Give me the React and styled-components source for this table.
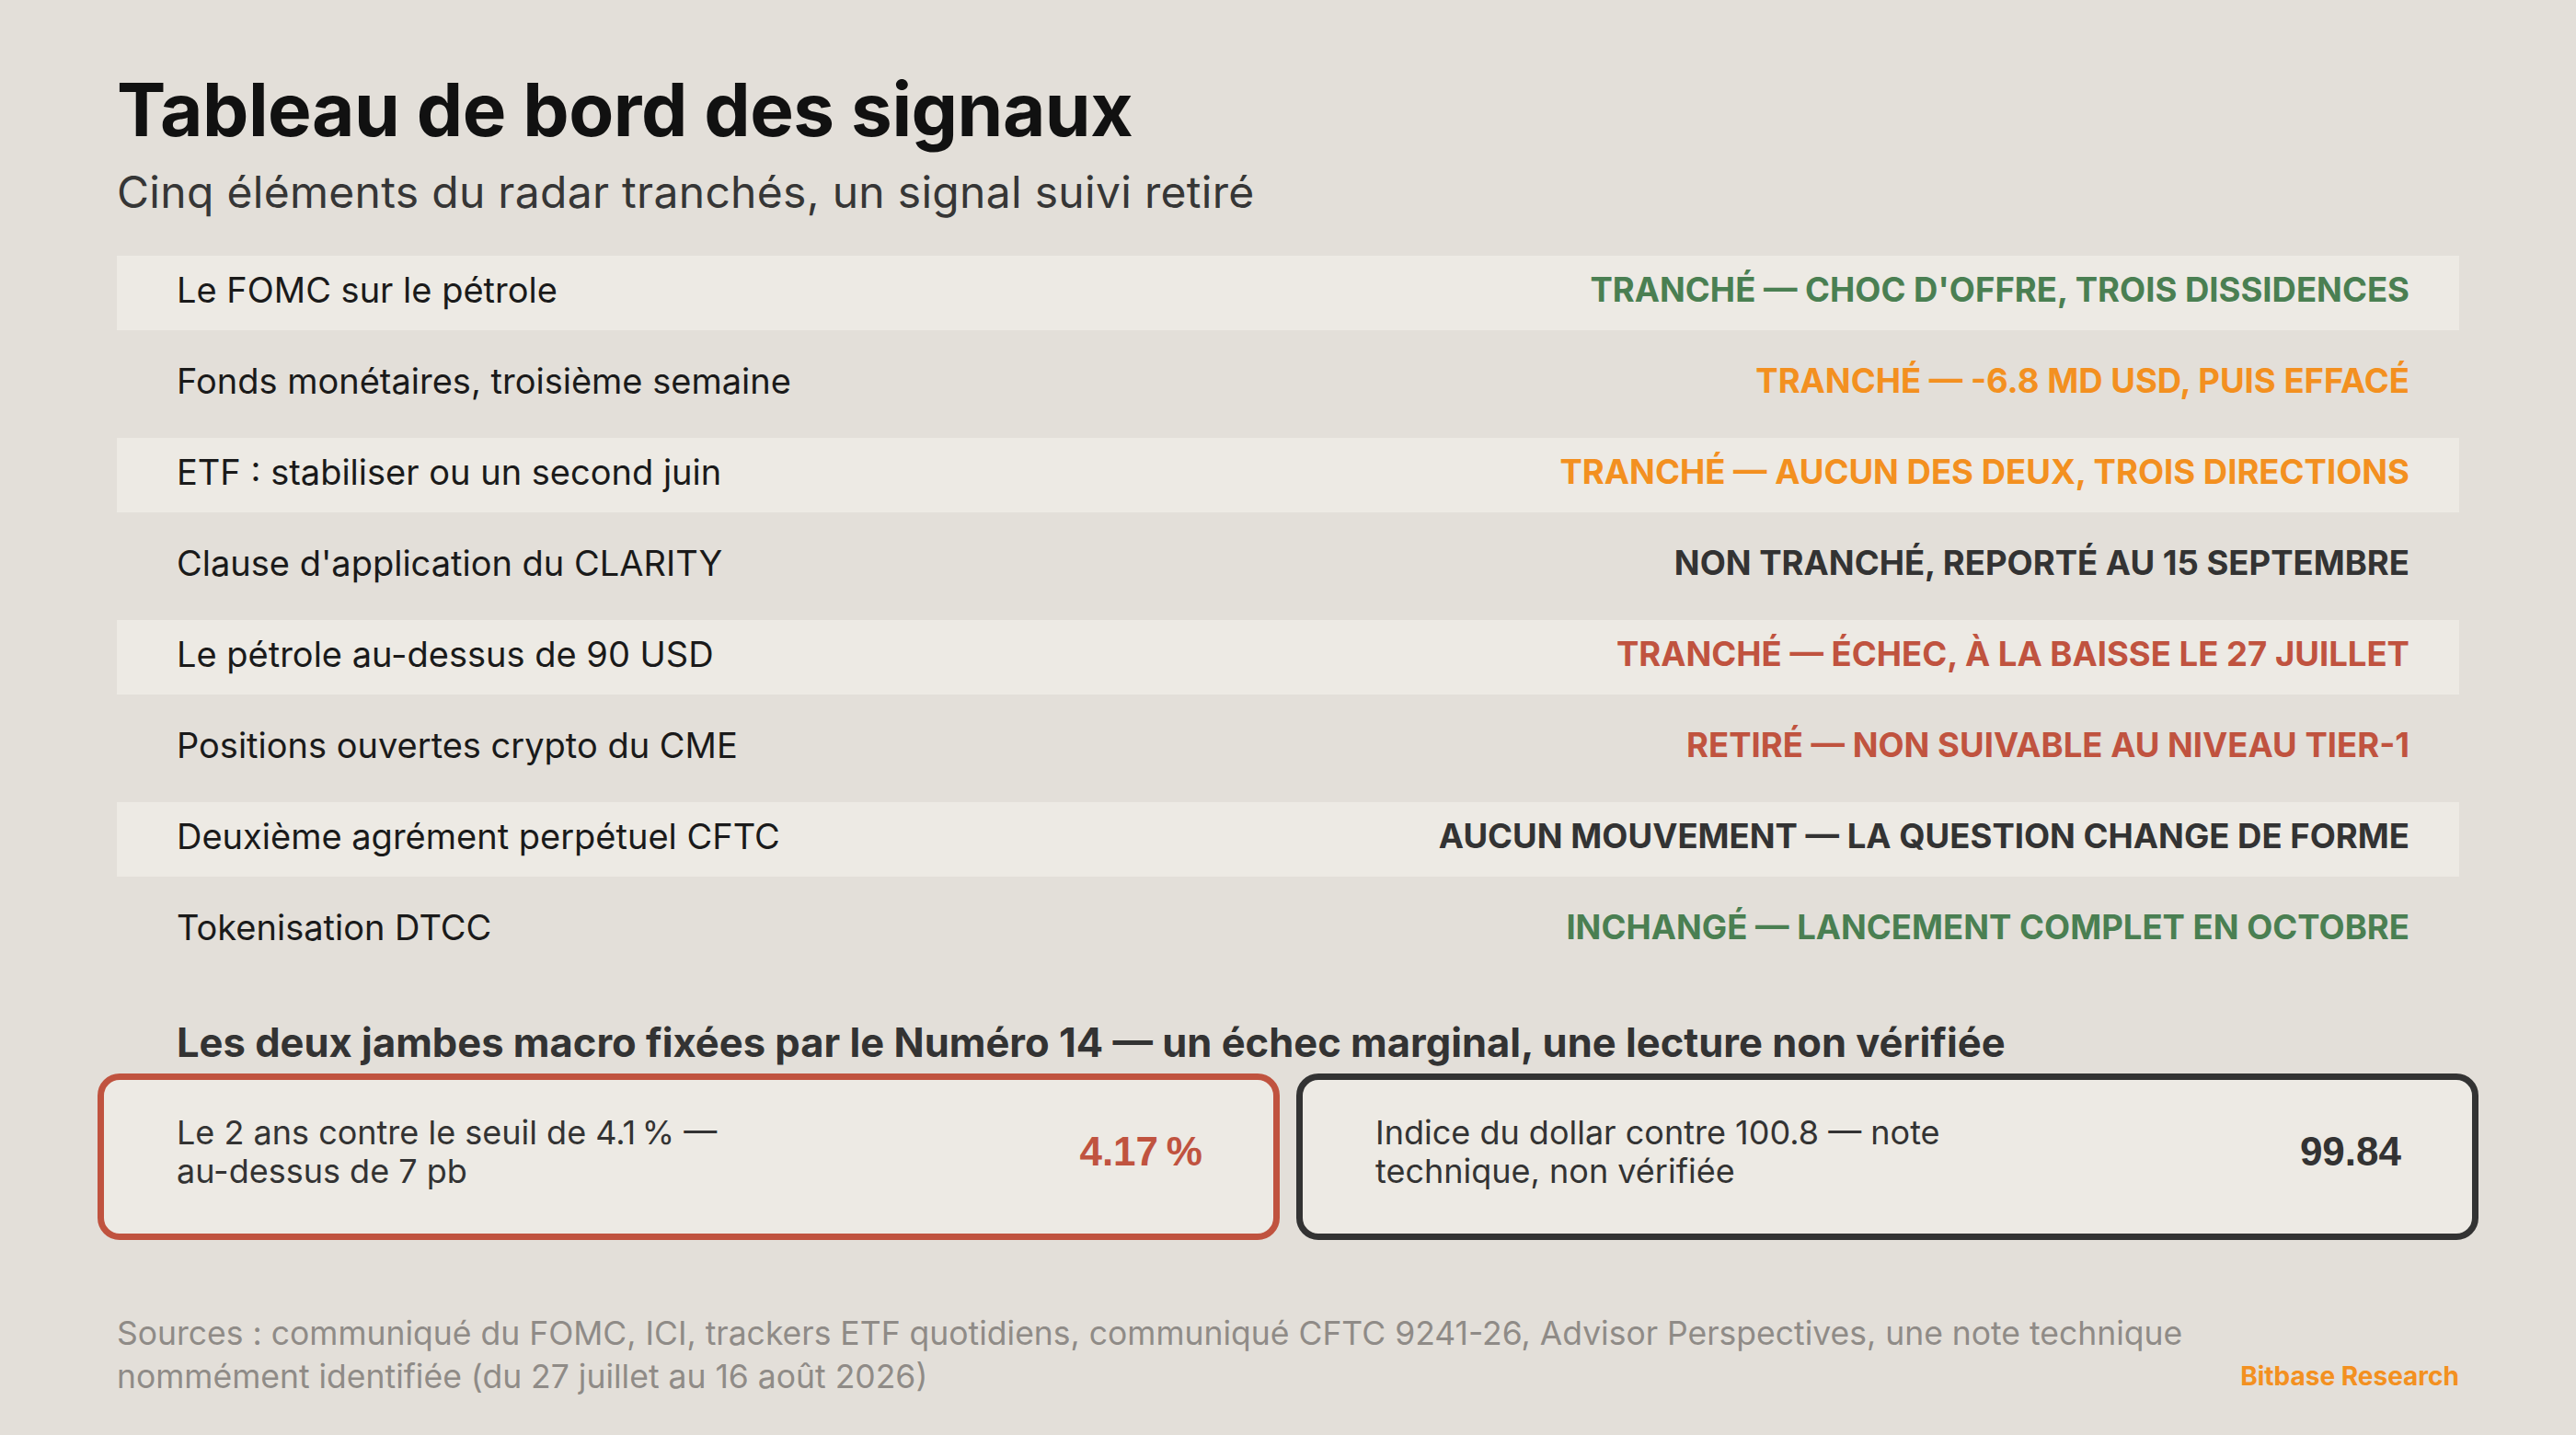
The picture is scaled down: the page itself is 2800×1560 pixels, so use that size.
import React from "react";
import styled, { createGlobalStyle } from "styled-components";

const GlobalStyle = createGlobalStyle`
  html, body {
    margin: 0;
    padding: 0;
    background: #e3dfd9;
  }
  body {
    font-family: Inter, "Open Sans", "Liberation Sans", sans-serif;
    color: #1a1a1a;
  }
`;

const tones = {
  green: "#4a7f52",
  orange: "#f39020",
  dark: "#333333",
  red: "#c0533f",
};

const rows = [
  { label: "Le FOMC sur le pétrole", status: "TRANCHÉ — CHOC D'OFFRE, TROIS DISSIDENCES", tone: "green" },
  { label: "Fonds monétaires, troisième semaine", status: "TRANCHÉ — -6.8 MD USD, PUIS EFFACÉ", tone: "orange" },
  { label: "ETF : stabiliser ou un second juin", status: "TRANCHÉ — AUCUN DES DEUX, TROIS DIRECTIONS", tone: "orange" },
  { label: "Clause d'application du CLARITY", status: "NON TRANCHÉ, REPORTÉ AU 15 SEPTEMBRE", tone: "dark" },
  { label: "Le pétrole au-dessus de 90 USD", status: "TRANCHÉ — ÉCHEC, À LA BAISSE LE 27 JUILLET", tone: "red" },
  { label: "Positions ouvertes crypto du CME", status: "RETIRÉ — NON SUIVABLE AU NIVEAU TIER-1", tone: "red" },
  { label: "Deuxième agrément perpétuel CFTC", status: "AUCUN MOUVEMENT — LA QUESTION CHANGE DE FORME", tone: "dark" },
  { label: "Tokenisation DTCC", status: "INCHANGÉ — LANCEMENT COMPLET EN OCTOBRE", tone: "green" },
];

// narrow no-break space before the percent sign, French style
const legs = [
  { text: "Le 2 ans contre le seuil de 4.1\u202F% — au-dessus de 7 pb", value: "4.17\u202F%", tone: "red" },
  { text: "Indice du dollar contre 100.8 — note technique, non vérifiée", value: "99.84", tone: "dark" },
];

const Page = styled.div`
  width: 2800px;
  height: 1560px;
  box-sizing: border-box;
  padding: 75px 127px 0 127px;
  display: flex;
  flex-direction: column;
`;

const Title = styled.h1`
  margin: 0;
  font-size: 80px;
  line-height: 88px;
  font-weight: 700;
  color: #111111;
  letter-spacing: -0.5px;
`;

const Subtitle = styled.p`
  margin: 18px 0 0 0;
  font-size: 48px;
  line-height: 56px;
  font-weight: 400;
  color: #363636;
  letter-spacing: 0.3px;
`;

const Table = styled.div`
  margin-top: 41px;
  display: flex;
  flex-direction: column;
  gap: 18px;
`;

const Row = styled.div`
  height: 81px;
  box-sizing: border-box;
  display: flex;
  align-items: center;
  justify-content: space-between;
  padding: 0 54px 7px 65px;
  background: ${(p) => (p.$shaded ? "#edeae4" : "transparent")};
`;

const Label = styled.span`
  font-size: 38px;
  line-height: 46px;
  color: #1a1a1a;
`;

const Status = styled.span`
  font-size: 36.5px;
  line-height: 46px;
  font-weight: 700;
  color: ${(p) => tones[p.$tone]};
`;

const SectionHead = styled.h2`
  margin: 55px 0 0 0;
  padding-left: 65px;
  font-size: 43.5px;
  line-height: 52px;
  font-weight: 700;
  color: #333333;
`;

const Cards = styled.div`
  margin: 8px -21px 0 -21px;
  display: grid;
  grid-template-columns: 1fr 1fr;
  gap: 18px;
`;

const Card = styled.div`
  height: 181px;
  box-sizing: border-box;
  border: 7px solid ${(p) => tones[p.$tone]};
  border-radius: 24px;
  background: #edeae4;
  display: flex;
  align-items: center;
  justify-content: space-between;
  padding: 0 77px 11px 79px;
`;

const CardText = styled.span`
  max-width: 640px;
  font-size: 36px;
  line-height: 42px;
  color: #333333;
`;

const CardValue = styled.span`
  font-family: "Liberation Sans", Arial, sans-serif;
  font-size: 44px;
  font-weight: 700;
  color: ${(p) => tones[p.$tone]};
`;

const Footer = styled.div`
  margin-top: 78px;
  display: flex;
  align-items: flex-end;
  justify-content: space-between;
  gap: 40px;
`;

const Sources = styled.p`
  margin: 0;
  max-width: 2300px;
  font-size: 35.5px;
  line-height: 47px;
  color: #8f8b87;
`;

const Brand = styled.span`
  margin-bottom: 4px;
  font-size: 28px;
  line-height: 40px;
  font-weight: 700;
  color: #f39020;
  white-space: nowrap;
`;

export default function App() {
  return (
    <>
      <GlobalStyle />
      <Page>
        <Title>Tableau de bord des signaux</Title>
        <Subtitle>Cinq éléments du radar tranchés, un signal suivi retiré</Subtitle>
        <Table>
          {rows.map((r, i) => (
            <Row key={r.label} $shaded={i % 2 === 0}>
              <Label>{r.label}</Label>
              <Status $tone={r.tone}>{r.status}</Status>
            </Row>
          ))}
        </Table>
        <SectionHead>
          Les deux jambes macro fixées par le Numéro 14 — un échec marginal, une lecture non vérifiée
        </SectionHead>
        <Cards>
          {legs.map((l) => (
            <Card key={l.value} $tone={l.tone}>
              <CardText>{l.text}</CardText>
              <CardValue $tone={l.tone}>{l.value}</CardValue>
            </Card>
          ))}
        </Cards>
        <Footer>
          <Sources>
            Sources : communiqué du FOMC, ICI, trackers ETF quotidiens, communiqué CFTC 9241-26, Advisor
            Perspectives, une note technique nommément identifiée (du 27 juillet au 16 août 2026)
          </Sources>
          <Brand>Bitbase Research</Brand>
        </Footer>
      </Page>
    </>
  );
}
